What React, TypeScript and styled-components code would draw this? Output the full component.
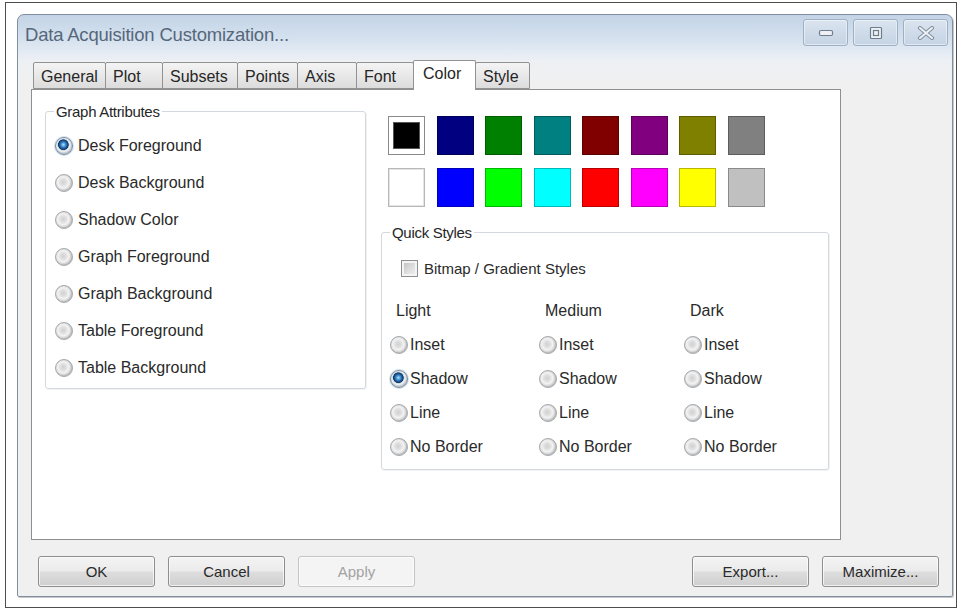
import React from 'react';
import styled, { createGlobalStyle } from 'styled-components';

const GlobalStyle = createGlobalStyle`
  html, body {
    margin: 0;
    padding: 0;
    background: #ffffff;
    font-family: "Liberation Sans", Arial, sans-serif;
  }
  * {
    box-sizing: border-box;
  }
`;

const Frame = styled.div`
  width: 952px;
  height: 606px;
  margin: 2px 0 0 5px;
  border: 1px solid #4d4d4d;
  padding: 11px 3px 9px 11px;
  background: #ffffff;
`;

const Window = styled.div`
  width: 936px;
  display: flex;
  flex-direction: column;
  border: 1px solid #7f8f9f;
  border-radius: 7px 7px 2px 2px;
  background: linear-gradient(180deg, #c4d4e6 0px, #d3e0ee 22px, #e2eaf3 36px, #edf0f4 46px, #f0f0f0 70px);
  box-shadow: 1px 1px 0 #c8c8c8;
`;

const TitleBar = styled.div`
  height: 36px;
  display: flex;
  align-items: center;
  justify-content: space-between;
  padding: 0 4px 0 7px;
`;

const Title = styled.div`
  font-size: 18.5px;
  color: #56677a;
  letter-spacing: -0.2px;
  margin-top: 4px;
`;

const Controls = styled.div`
  display: flex;
  gap: 5px;
  align-self: flex-start;
  margin-top: 4px;
`;

const CaptionButton = styled.div`
  width: 45px;
  height: 27px;
  border: 1px solid #9fb0c3;
  border-radius: 3px;
  background: linear-gradient(180deg, #dbe5f0 0%, #cfdbe9 50%, #c5d4e5 100%);
  box-shadow: inset 0 0 0 1px rgba(255, 255, 255, 0.45);
  display: flex;
  align-items: center;
  justify-content: center;
`;

const Body = styled.div`
  padding: 11px 0 0 13px;
`;

const TabStrip = styled.div`
  display: flex;
  align-items: flex-end;
  height: 27px;
  padding-left: 2px;
  position: relative;
  z-index: 1;
`;

const Tab = styled.div<{ $w: number; $active?: boolean }>`
  width: ${p => p.$w}px;
  height: ${p => (p.$active ? 30 : 27)}px;
  margin-bottom: ${p => (p.$active ? -1 : 0)}px;
  padding: ${p => (p.$active ? '4px 0 0 9px' : '5px 0 0 7px')};
  font-size: 16px;
  color: #262626;
  border: 1px solid #929292;
  border-bottom: ${p => (p.$active ? 'none' : '1px solid #929292')};
  margin-right: -1px;
  background: ${p => (p.$active ? '#ffffff' : 'linear-gradient(180deg, #f4f4f4 0%, #e8e8e8 50%, #dcdcdc 100%)')};
  border-radius: 2px 2px 0 0;
  white-space: nowrap;
`;

const Panel = styled.div`
  width: 810px;
  height: 451px;
  border: 1px solid #8f8f8f;
  background: #ffffff;
  display: flex;
  align-items: flex-start;
  gap: 15px;
  padding: 13px 0 0 13px;
`;

const Group = styled.fieldset<{ $w: number; $h: number }>`
  width: ${p => p.$w}px;
  height: ${p => p.$h}px;
  margin: 0;
  padding: 0;
  border: 1px solid #d3d9de;
  border-radius: 3px;
  box-shadow: inset 1px 1px 0 #ffffff, 1px 1px 0 #f2f2f2;
`;

const Legend = styled.legend`
  font-size: 15px;
  line-height: 17px;
  letter-spacing: -0.3px;
  color: #262626;
  padding: 0 2px;
  margin-left: 8px;
`;

const AttrList = styled.div`
  display: flex;
  flex-direction: column;
  padding: 7px 0 0 9px;
`;

const RadioRow = styled.label<{ $h: number; $gap: number }>`
  height: ${p => p.$h}px;
  display: flex;
  align-items: center;
  gap: ${p => p.$gap}px;
  font-size: 16px;
  color: #2a2a2a;
  white-space: nowrap;
`;

const RadioCircle = styled.span<{ $checked?: boolean }>`
  width: 18px;
  height: 18px;
  flex: none;
  border-radius: 50%;
  border: 1px solid ${p => (p.$checked ? '#7b8c9c' : '#a3a9ae')};
  background: ${p =>
    p.$checked
      ? 'radial-gradient(circle at 46% 42%, #b4e2fa 0, #4d9ad6 2px, #1d5f9e 3.6px, #0e3868 5px, #c9d3dc 5.6px, #f1f4f7 6.6px, #bfc7cf 8.5px)'
      : 'radial-gradient(circle at 45% 45%, #d0d0d0 0, #e2e2e2 3.5px, #f3f3f3 5.5px, #dcdcdc 7.2px, #bdbdbd 8.5px)'};
  box-shadow: ${p => (p.$checked ? '0 0 0 1px rgba(120, 170, 210, 0.35)' : 'none')};
`;

const RightColumn = styled.div`
  width: 448px;
  padding-top: 13px;
  display: flex;
  flex-direction: column;
  gap: 17px;
`;

const SwatchGrid = styled.div`
  display: grid;
  grid-template-columns: repeat(8, 37px);
  column-gap: 11.5px;
  row-gap: 13px;
  margin-left: 7px;
`;

const Swatch = styled.div<{ $color: string; $selected?: boolean }>`
  width: 37px;
  height: 39px;
  border: 1px solid ${p => (p.$selected ? '#8a8a8a' : 'rgba(0, 0, 0, 0.28)')};
  background: ${p => (p.$selected ? '#ffffff' : p.$color)};
  padding: 5px 4px;
  box-shadow: ${p => (p.$color === '#ffffff' && !p.$selected ? 'inset 0 0 0 1px #e4e4e4' : 'none')};
`;

const SwatchInner = styled.div<{ $color: string }>`
  width: 100%;
  height: 100%;
  background: ${p => p.$color};
  border: 1px solid #555555;
`;

const CheckRow = styled.label`
  display: flex;
  align-items: center;
  gap: 6px;
  height: 26px;
  margin: 14px 0 0 19px;
  font-size: 15px;
  color: #2a2a2a;
`;

const CheckBox = styled.span`
  width: 17px;
  height: 17px;
  border: 1px solid #8e8f8f;
  background: linear-gradient(135deg, #bdbdbd 0%, #dedede 55%, #f3f3f3 100%);
  box-shadow: inset 0 0 0 2px #f4f4f4;
`;

const StyleGrid = styled.div`
  display: grid;
  grid-template-columns: 149px 145px 1fr;
  grid-auto-rows: 34px;
  margin: 13px 0 0 8px;
`;

const ColHeader = styled.div`
  display: flex;
  align-items: center;
  padding-left: 6px;
  font-size: 16px;
  color: #2a2a2a;
`;

const ButtonRow = styled.div`
  display: flex;
  justify-content: space-between;
  margin-top: 16px;
  padding: 0 13px 9px 20px;
`;

const ButtonGroup = styled.div`
  display: flex;
  gap: 13px;
`;

const Button = styled.button<{ $disabled?: boolean }>`
  width: 117px;
  height: 31px;
  font-family: "Liberation Sans", Arial, sans-serif;
  font-size: 15px;
  color: ${p => (p.$disabled ? '#a3a3a3' : '#2a2a2a')};
  border: 1px solid ${p => (p.$disabled ? '#c4c4c4' : '#8e8e8e')};
  border-radius: 3px;
  background: ${p =>
    p.$disabled
      ? '#f4f4f4'
      : 'linear-gradient(180deg, #f4f4f4 0%, #ebebeb 48%, #dddddd 52%, #cfcfcf 100%)'};
  box-shadow: inset 0 0 0 1px rgba(255, 255, 255, 0.7);
  padding: 0;
`;

const MinIcon = () => (
  <svg width="16" height="10" viewBox="0 0 16 10">
    <rect x="1.5" y="2.5" width="13" height="5" rx="1.5" fill="#eef2f6" stroke="#6f7c8a" strokeWidth="1.2" />
  </svg>
);

const MaxIcon = () => (
  <svg width="14" height="14" viewBox="0 0 14 14">
    <rect x="1.5" y="1.5" width="11" height="11" rx="1" fill="#eef2f6" stroke="#6f7c8a" strokeWidth="1.2" />
    <rect x="4.5" y="4.5" width="5" height="5" fill="none" stroke="#6f7c8a" strokeWidth="1.2" />
  </svg>
);

const CloseIcon = () => (
  <svg width="18" height="14" viewBox="0 0 18 14">
    <path d="M3 2 L15 12 M15 2 L3 12" stroke="#8593a2" strokeWidth="4.2" strokeLinecap="round" />
    <path d="M3 2 L15 12 M15 2 L3 12" stroke="#edf1f5" strokeWidth="2" strokeLinecap="round" />
  </svg>
);

const tabs = [
  { label: 'General', w: 73 },
  { label: 'Plot', w: 58 },
  { label: 'Subsets', w: 76 },
  { label: 'Points', w: 61 },
  { label: 'Axis', w: 60 },
  { label: 'Font', w: 58 },
  { label: 'Color', w: 63, active: true },
  { label: 'Style', w: 55 },
];

const attributes = [
  'Desk Foreground',
  'Desk Background',
  'Shadow Color',
  'Graph Foreground',
  'Graph Background',
  'Table Foreground',
  'Table Background',
];

const swatches = [
  '#000000', '#000080', '#008000', '#008080', '#800000', '#800080', '#808000', '#808080',
  '#ffffff', '#0000ff', '#00ff00', '#00ffff', '#ff0000', '#ff00ff', '#ffff00', '#c0c0c0',
];

const styleRows = ['Inset', 'Shadow', 'Line', 'No Border'];
const styleCols = ['Light', 'Medium', 'Dark'];

const App: React.FC = () => {
  return (
    <>
      <GlobalStyle />
      <Frame>
        <Window>
          <TitleBar>
            <Title>Data Acquisition Customization...</Title>
            <Controls>
              <CaptionButton><MinIcon /></CaptionButton>
              <CaptionButton><MaxIcon /></CaptionButton>
              <CaptionButton><CloseIcon /></CaptionButton>
            </Controls>
          </TitleBar>

          <Body>
            <TabStrip>
              {tabs.map(t => (
                <Tab key={t.label} $w={t.w} $active={t.active}>{t.label}</Tab>
              ))}
            </TabStrip>

            <Panel>
              <Group $w={321} $h={286}>
                <Legend>Graph Attributes</Legend>
                <AttrList>
                  {attributes.map((a, i) => (
                    <RadioRow key={a} $h={37} $gap={5}>
                      <RadioCircle $checked={i === 0} />
                      {a}
                    </RadioRow>
                  ))}
                </AttrList>
              </Group>

              <RightColumn>
                <SwatchGrid>
                  {swatches.map((c, i) => (
                    <Swatch key={c} $color={c} $selected={i === 0}>
                      {i === 0 && <SwatchInner $color={c} />}
                    </Swatch>
                  ))}
                </SwatchGrid>

                <Group $w={448} $h={246}>
                  <Legend>Quick Styles</Legend>
                  <CheckRow>
                    <CheckBox />
                    Bitmap / Gradient Styles
                  </CheckRow>
                  <StyleGrid>
                    {styleCols.map(c => (
                      <ColHeader key={c}>{c}</ColHeader>
                    ))}
                    {styleRows.map((r, ri) =>
                      styleCols.map((c, ci) => (
                        <RadioRow key={r + c} $h={34} $gap={2}>
                          <RadioCircle $checked={ri === 1 && ci === 0} />
                          {r}
                        </RadioRow>
                      ))
                    )}
                  </StyleGrid>
                </Group>
              </RightColumn>
            </Panel>
          </Body>

          <ButtonRow>
            <ButtonGroup>
              <Button>OK</Button>
              <Button>Cancel</Button>
              <Button $disabled>Apply</Button>
            </ButtonGroup>
            <ButtonGroup>
              <Button>Export...</Button>
              <Button>Maximize...</Button>
            </ButtonGroup>
          </ButtonRow>
        </Window>
      </Frame>
    </>
  );
};

export default App;
